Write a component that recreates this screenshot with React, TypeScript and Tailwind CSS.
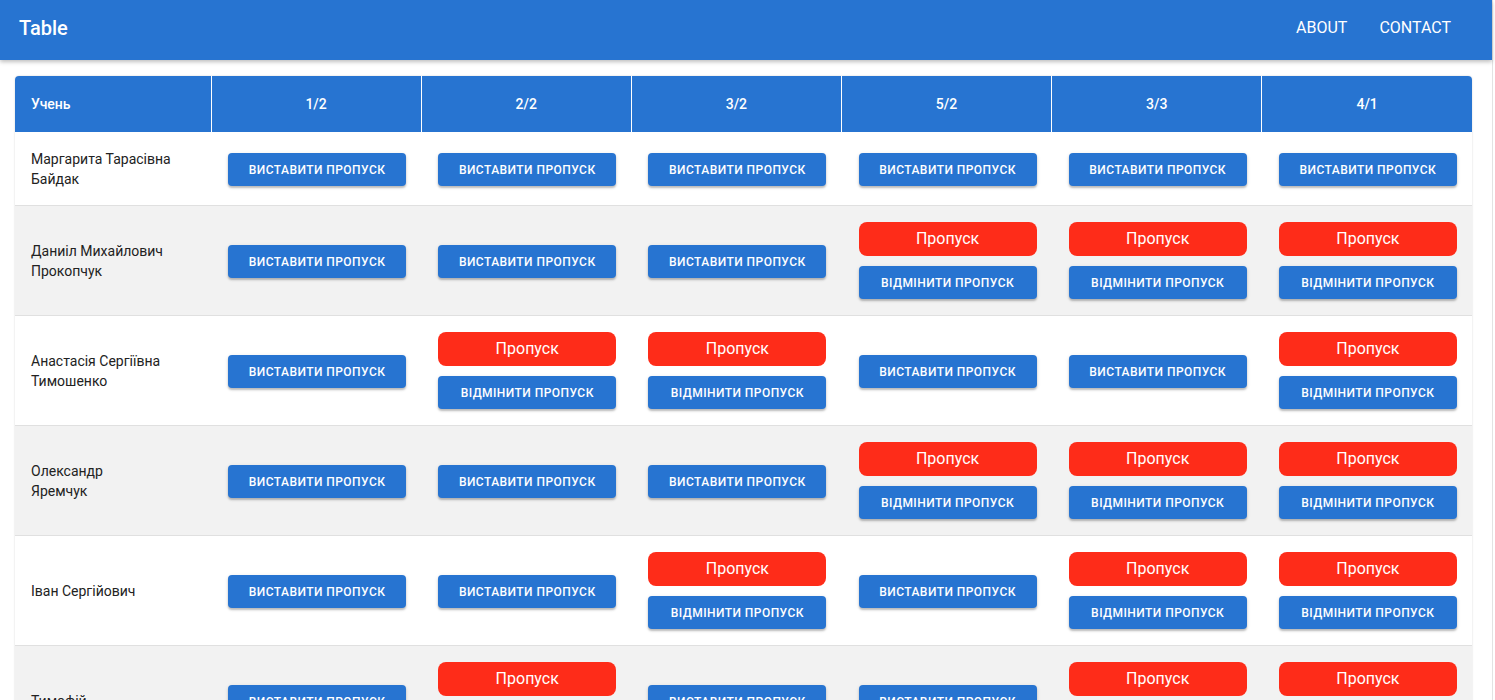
const columns = ["1/2", "2/2", "3/2", "5/2", "3/3", "4/1"];

const students: { name: string[]; absent: boolean[] }[] = [
  { name: ["Маргарита Тарасівна", "Байдак"], absent: [false, false, false, false, false, false] },
  { name: ["Даниіл Михайлович", "Прокопчук"], absent: [false, false, false, true, true, true] },
  { name: ["Анастасія Сергіївна", "Тимошенко"], absent: [false, true, true, false, false, true] },
  { name: ["Олександр", "Яремчук"], absent: [false, false, false, true, true, true] },
  { name: ["Іван Сергійович"], absent: [false, false, true, false, true, true] },
  { name: ["Тимофій"], absent: [false, true, false, false, true, true] },
];

function BlueButton({ label, className = "" }: { label: string; className?: string }) {
  return (
    <button
      className={
        "mx-auto flex h-[33px] w-[178px] items-center justify-center rounded-[4px] bg-[#2774d1] text-[12px] font-medium uppercase tracking-[0.45px] text-white shadow-[0_2px_2px_rgba(0,0,0,0.22),0_1px_4px_rgba(0,0,0,0.1)] " +
        className
      }
    >
      {label}
    </button>
  );
}

function Cell({ absent }: { absent: boolean }) {
  if (!absent) {
    return (
      <td className="py-4 pl-[17px] pr-[15px] align-middle">
        <BlueButton label="Виставити пропуск" className="mb-[3px] mt-[5px]" />
      </td>
    );
  }
  return (
    <td className="py-4 pl-[17px] pr-[15px] align-middle">
      <div className="mx-auto flex h-[34px] w-[178px] items-center justify-center rounded-[8px] bg-[#fe2c19] text-[16px] text-white">
        Пропуск
      </div>
      <BlueButton label="Відмінити пропуск" className="mt-[10px]" />
    </td>
  );
}

export default function App() {
  return (
    <div className="flex min-h-screen bg-white font-['Roboto',sans-serif]">
      <div className="w-[1492px] shrink-0">
        <header className="relative z-10 flex h-[60px] items-center justify-between bg-[#2774d1] pb-1 pl-[19px] pr-[41px] text-white shadow-[0_2px_4px_rgba(0,0,0,0.25)]">
          <h1 className="text-[20px] font-medium">Table</h1>
          <nav className="flex gap-8 text-[16px] uppercase">
            <a>About</a>
            <a>Contact</a>
          </nav>
        </header>
        <main className="pl-[15px] pr-[20px] pt-4">
          <div className="overflow-hidden rounded-t-[4px] shadow-[0_0_2px_rgba(0,0,0,0.18)]">
            <table className="w-full table-fixed border-collapse">
              <colgroup>
                <col className="w-[196px]" />
                {columns.map((c) => (
                  <col key={c} />
                ))}
              </colgroup>
              <thead>
                <tr className="h-14 bg-[#2774d1] text-sm font-medium text-white">
                  <th className="px-4 text-left font-medium">Учень</th>
                  {columns.map((c) => (
                    <th key={c} className="border-l border-white font-medium">
                      {c}
                    </th>
                  ))}
                </tr>
              </thead>
              <tbody>
                {students.map((s, i) => (
                  <tr
                    key={s.name.join(" ")}
                    className={"border-b border-[#e0e0e0] " + (i % 2 === 1 ? "bg-[#f2f2f2]" : "bg-white")}
                  >
                    <td className="px-4 text-[14px] leading-5 text-[#222]">
                      {s.name.map((line) => (
                        <div key={line}>{line}</div>
                      ))}
                    </td>
                    {s.absent.map((a, j) => (
                      <Cell key={j} absent={a} />
                    ))}
                  </tr>
                ))}
              </tbody>
            </table>
          </div>
        </main>
      </div>
      <div className="flex-1 border-l border-[#e3e3e3]" />
    </div>
  );
}
